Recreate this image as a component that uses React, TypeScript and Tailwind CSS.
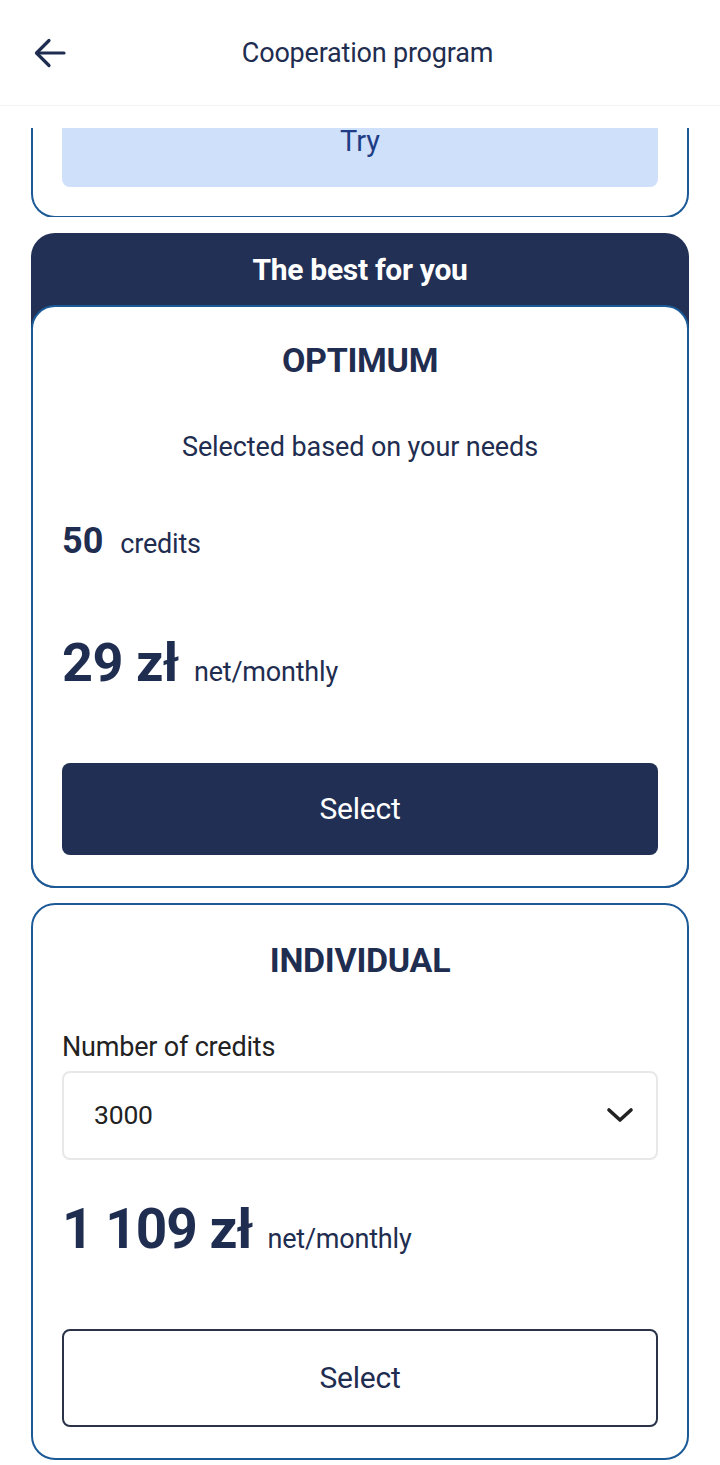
import React from "react";

const font = { fontFamily: "Roboto, 'Noto Sans', sans-serif" };

export default function App() {
  return (
    <div className="w-[720px] h-[1465px] bg-white overflow-hidden text-[#1f2d50]" style={font}>
      {/* Header */}
      <div className="relative h-[106px] flex items-center justify-center border-b border-[#f3f3f3] pl-[15px]">
        <button className="absolute left-[33px] top-[36px] w-[34px] h-[34px] flex items-center justify-center">
          <svg width="34" height="34" viewBox="0 0 34 34" fill="none" stroke="#1f2d50" strokeWidth="3.2" strokeLinecap="round" strokeLinejoin="round">
            <path d="M31 17H4" />
            <path d="M16 4.5L3.5 17L16 29.5" />
          </svg>
        </button>
        <div className="text-[27px] leading-none tracking-[-0.2px] mt-[2px]">Cooperation program</div>
      </div>

      <div className="h-[22px]" />

      {/* Clipped first card */}
      <div className="px-[31px]">
        <div className="h-[89px] overflow-hidden">
          <div className="-mt-[33px] border-2 border-t-0 border-[#1b5a97] rounded-b-[24px] px-[29px] pb-[29px]">
            <div className="h-[92px] bg-[#cfe0fa] rounded-[8px] flex items-center justify-center text-[29px] leading-none text-[#1e3d86]">
              Try
            </div>
          </div>
        </div>
      </div>

      {/* Best for you card */}
      <div className="px-[31px] mt-[16px]">
        <div className="bg-[#223055] rounded-[24px]">
          <div className="h-[72px] flex items-center justify-center text-white font-bold text-[30px] leading-none pt-[2px] tracking-[-0.3px]">
            The best for you
          </div>
          <div className="bg-white border-2 border-[#1b5a97] rounded-[24px] px-[29px] pt-[36px] pb-[31px]">
            <div className="text-center font-bold text-[34px] leading-none tracking-[-0.3px]">OPTIMUM</div>
            <div className="text-center text-[27px] leading-none mt-[56.5px] tracking-[-0.1px]">Selected based on your needs</div>
            <div className="flex items-baseline mt-[62px]">
              <span className="font-bold text-[36px] leading-none">50</span>
              <span className="text-[27px] leading-none ml-[17px] tracking-[-0.2px]">credits</span>
            </div>
            <div className="flex items-baseline mt-[77px]">
              <span className="font-bold text-[54px] leading-none tracking-[-0.5px]">29 zł</span>
              <span className="text-[27px] leading-none ml-[15px] tracking-[-0.2px]">net/monthly</span>
            </div>
            <div className="mt-[73px] h-[92px] bg-[#222f55] rounded-[8px] flex items-center justify-center text-white text-[30px] leading-none tracking-[-0.2px]">
              Select
            </div>
          </div>
        </div>
      </div>

      {/* Individual card */}
      <div className="px-[31px] mt-[15px]">
        <div className="border-2 border-[#1b5a97] rounded-[24px] px-[29px] pt-[38px] pb-[31px]">
          <div className="text-center font-bold text-[34px] leading-none tracking-[-0.3px]">INDIVIDUAL</div>
          <div className="text-[27px] leading-none text-[#222] mt-[57.5px] tracking-[-0.2px]">Number of credits</div>
          <div className="mt-[9.5px] h-[89px] border-2 border-[#e8e8e8] rounded-[8px] flex items-center justify-between pl-[30px] pr-[21px]">
            <span className="text-[26.5px] leading-none text-[#222] tracking-[-0.2px]">3000</span>
            <svg width="30" height="20" viewBox="0 0 30 20" fill="none" stroke="#222" strokeWidth="3.6" strokeLinecap="round" strokeLinejoin="round">
              <path d="M4 5L15 15L26 5" />
            </svg>
          </div>
          <div className="flex items-baseline mt-[42.5px]">
            <span className="font-bold text-[55px] leading-none tracking-[-1px]">1 109 zł</span>
            <span className="text-[27px] leading-none ml-[15px] tracking-[-0.2px]">net/monthly</span>
          </div>
          <div className="mt-[71.5px] h-[98px] border-2 border-[#2a3348] rounded-[8px] flex items-center justify-center text-[30px] leading-none tracking-[-0.2px]">
            Select
          </div>
        </div>
      </div>
    </div>
  );
}
